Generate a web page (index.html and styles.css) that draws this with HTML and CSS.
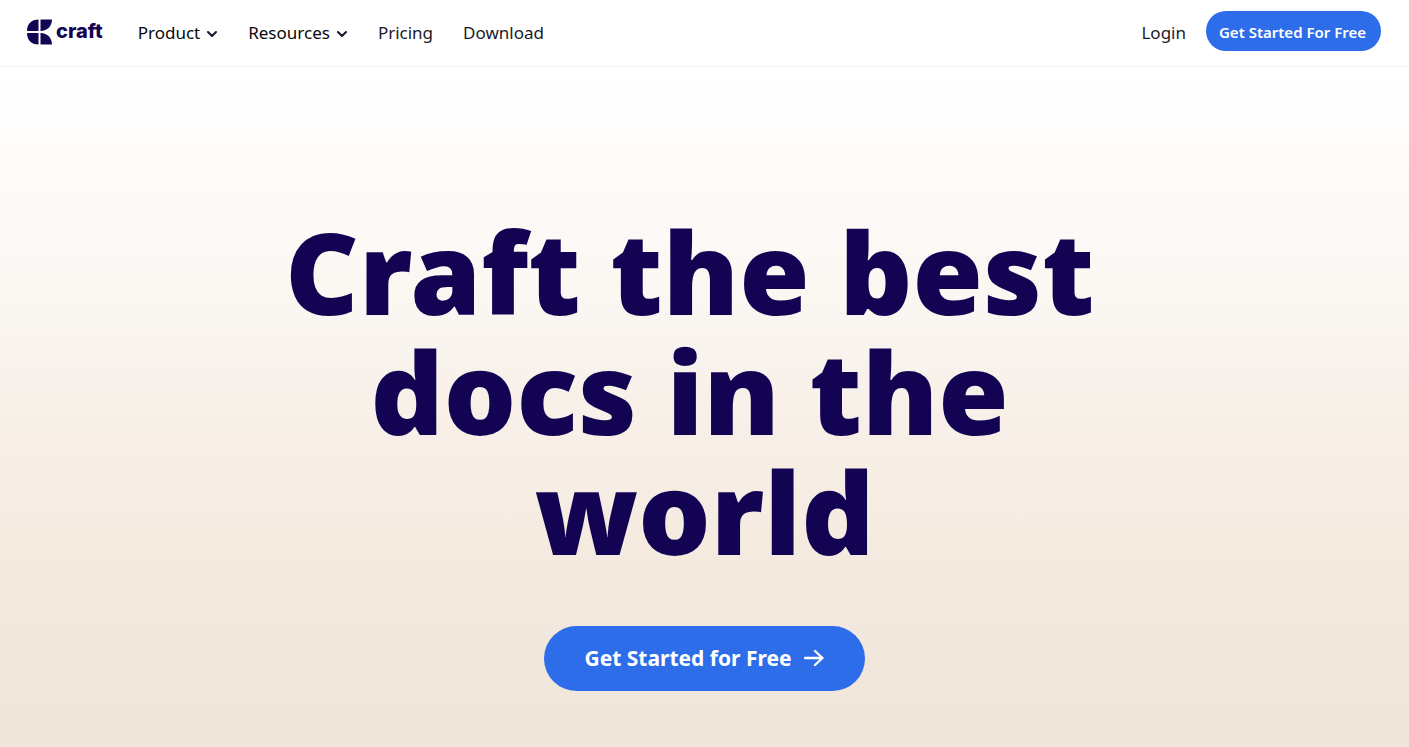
FILE: index.html
```html
<!DOCTYPE html>
<html lang="en">
<head>
<meta charset="utf-8">
<meta name="viewport" content="width=device-width, initial-scale=1">
<title>Craft</title>
<link rel="stylesheet" href="styles.css">
</head>
<body>
<header class="header">
  <a class="logo" href="#">
    <svg class="logo-mark" viewBox="0 0 26 26" aria-hidden="true">
      <path d="M12 0.5V12H0.5C0.5 5 5 0.5 12 0.5ZM14 0.5H25.5C25.5 7 21 12 14 12ZM0.5 14H12V25.5C5 25.5 0.5 21 0.5 14ZM14 14C21 14 25.5 19 25.5 25.5H14Z"/>
    </svg>
    <span>craft</span>
  </a>
  <nav class="nav">
    <button class="nav-item menu" type="button">Product
      <svg class="chevron" viewBox="0 0 12 8" aria-hidden="true"><path d="M2 2L6 6L10 2"/></svg>
    </button>
    <button class="nav-item menu" type="button">Resources
      <svg class="chevron" viewBox="0 0 12 8" aria-hidden="true"><path d="M2 2L6 6L10 2"/></svg>
    </button>
    <a class="nav-item" href="#">Pricing</a>
    <a class="nav-item" href="#">Download</a>
  </nav>
  <div class="account">
    <a class="nav-item login" href="#">Login</a>
    <a class="signup" href="#">Get Started For Free</a>
  </div>
</header>
<main class="hero">
  <h1 class="title">Craft the best&nbsp;<br>docs in the&nbsp;<br>world</h1>
  <a class="cta" href="#">Get Started for Free
    <svg class="arrow" viewBox="0 0 20 18" aria-hidden="true"><path d="M1 9H18M11 2L18.5 9L11 16"/></svg>
  </a>
</main>
</body>
</html>
```
FILE: styles.css
```css
* { box-sizing: border-box; }

body {
  margin: 0;
  min-height: 100vh;
  display: flex;
  flex-direction: column;
  font-family: "Noto Sans", "Open Sans", sans-serif;
  color: #1a1a2b;
  background: #fff;
}

a { color: inherit; text-decoration: none; }

.header {
  display: flex;
  align-items: center;
  padding: 11px 28px 15px 26px;
  border-bottom: 1px solid #f3f3f3;
}

.logo {
  display: flex;
  align-items: center;
  gap: 3px;
  padding-top: 2px;
  color: #130453;
  font: 800 20px/24px Inter, sans-serif;
}

.logo span { padding-bottom: 2px; }

.logo-mark { width: 27px; height: 26px; fill: #130453; }

.nav {
  display: flex;
  align-items: center;
  gap: 30px;
  margin-left: 35px;
  padding-top: 3px;
}

.nav-item {
  font-family: inherit;
  font-size: 17px;
  line-height: 24px;
}

.menu {
  display: flex;
  align-items: center;
  gap: 6px;
  padding: 0;
  border: 0;
  background: none;
  color: #08080c;
}

.chevron {
  width: 12px;
  height: 8px;
  margin-top: 2px;
  fill: none;
  stroke: #15152a;
  stroke-width: 2;
  stroke-linecap: round;
  stroke-linejoin: round;
}

.account {
  display: flex;
  align-items: center;
  gap: 20px;
  margin-left: auto;
}

.login { padding-top: 3px; }

.signup {
  padding: 9px 15px 7px 13px;
  border-radius: 20px;
  background: #2d6dea;
  color: #fff;
  font-size: 15px;
  font-weight: 600;
  line-height: 24px;
}

.hero {
  flex: 1;
  display: flex;
  flex-direction: column;
  align-items: center;
  padding: 144px 24px 56px;
  background: linear-gradient(#fff 0%, #fefdfc 10%, #fbf8f4 30%, #f8f1ea 48%, #f4e9de 75%, #f0e5da 100%);
}

.title {
  margin: 0;
  color: #130453;
  font-size: 114px;
  font-weight: 900;
  line-height: 120px;
  text-align: center;
}

.cta {
  display: flex;
  align-items: center;
  gap: 12px;
  margin-top: 55px;
  padding: 16px 41px 17px 40px;
  border-radius: 33px;
  background: #2d6dea;
  color: #fff;
  font-size: 21px;
  font-weight: 700;
  line-height: 32px;
}

.arrow {
  width: 20px;
  height: 18px;
  fill: none;
  stroke: #fff;
  stroke-width: 2.3;
  stroke-linecap: round;
  stroke-linejoin: round;
}
```
